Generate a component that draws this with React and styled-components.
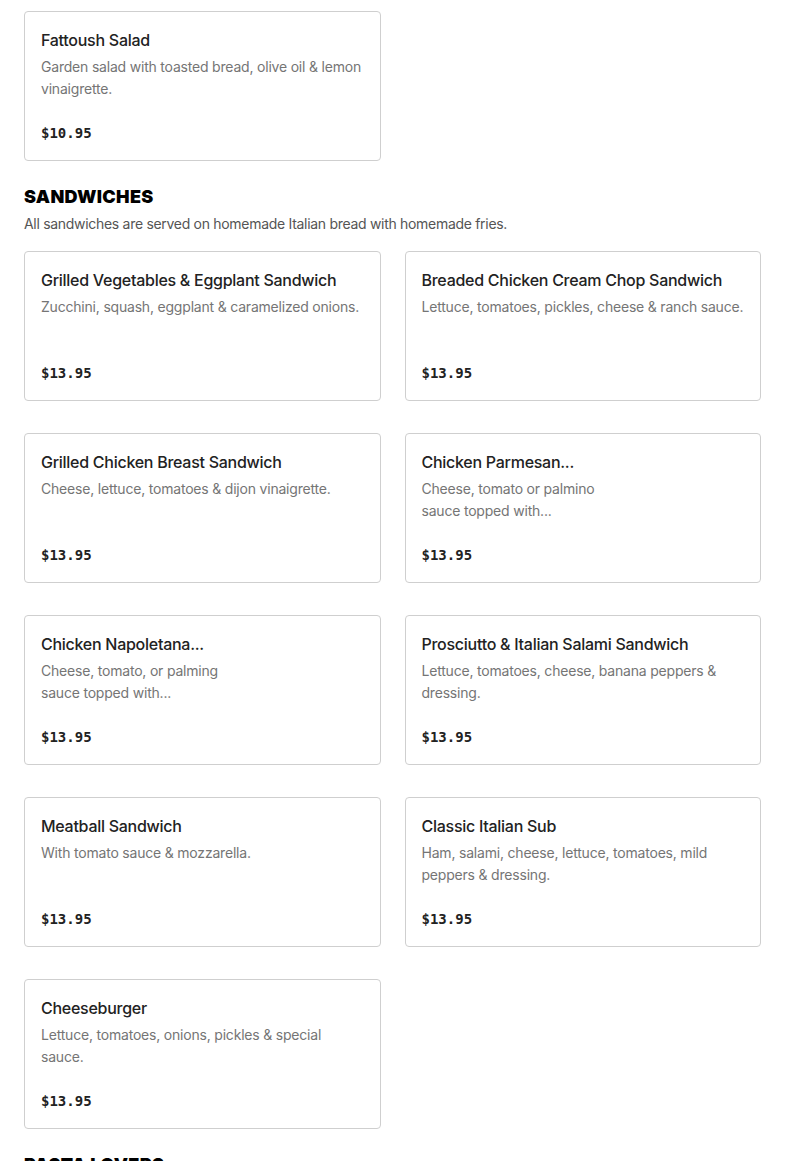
import React from "react";
import styled, { createGlobalStyle } from "styled-components";

const Global = createGlobalStyle`
  html, body { margin: 0; padding: 0; background: #fff; }
  body { font-family: Inter, "Noto Sans", sans-serif; color: #222; }
`;

const Page = styled.main`
  padding: 11px 24px 0;
  height: 1161px;
  overflow: hidden;
  box-sizing: border-box;
`;

const Section = styled.section`
  margin-bottom: 28px;
`;

const Heading = styled.h2`
  margin: 0;
  font-family: Inter, "Liberation Sans", sans-serif;
  font-weight: 900;
  font-size: 18px;
  line-height: 16px;
  letter-spacing: 0.3px;
  color: #000;
  text-transform: uppercase;
`;

const Intro = styled.p`
  margin: 8px 0 16px;
  font-size: 14px;
  line-height: 22px;
  letter-spacing: -0.3px;
  color: #555;
`;

const Grid = styled.div`
  display: grid;
  grid-template-columns: 1fr 1fr;
  column-gap: 24px;
  row-gap: 32px;
`;

const Card = styled.article`
  box-sizing: border-box;
  height: 150px;
  border: 1px solid #cfcfcf;
  border-radius: 4px;
  padding: 16px;
  display: flex;
  flex-direction: column;
`;

const Title = styled.h3`
  margin: 0;
  font-size: 16px;
  font-weight: 500;
  line-height: 24px;
  color: #222;
  letter-spacing: -0.27px;
`;

const Desc = styled.p`
  margin: 4px 0 0;
  font-size: 14px;
  line-height: 22px;
  letter-spacing: -0.2px;
  color: #757575;
`;

const Price = styled.div`
  margin-top: auto;
  font-family: "DejaVu Sans Mono", "Liberation Mono", monospace;
  font-weight: 700;
  font-size: 14px;
  line-height: 22px;
  color: #222;
`;

const salads = [
  { t: "Fattoush Salad", d: "Garden salad with toasted bread, olive oil & lemon vinaigrette.", p: "$10.95" },
];

const sandwiches = [
  { t: "Grilled Vegetables & Eggplant Sandwich", d: "Zucchini, squash, eggplant & caramelized onions.", p: "$13.95" },
  { t: "Breaded Chicken Cream Chop Sandwich", d: "Lettuce, tomatoes, pickles, cheese & ranch sauce.", p: "$13.95" },
  { t: "Grilled Chicken Breast Sandwich", d: "Cheese, lettuce, tomatoes & dijon vinaigrette.", p: "$13.95" },
  { t: "Chicken Parmesan...", d: ["Cheese, tomato or palmino", "sauce topped with..."], p: "$13.95" },
  { t: "Chicken Napoletana...", d: ["Cheese, tomato, or palming", "sauce topped with..."], p: "$13.95" },
  { t: "Prosciutto & Italian Salami Sandwich", d: "Lettuce, tomatoes, cheese, banana peppers & dressing.", p: "$13.95" },
  { t: "Meatball Sandwich", d: "With tomato sauce & mozzarella.", p: "$13.95" },
  { t: "Classic Italian Sub", d: "Ham, salami, cheese, lettuce, tomatoes, mild peppers & dressing.", p: "$13.95" },
  { t: "Cheeseburger", d: "Lettuce, tomatoes, onions, pickles & special sauce.", p: "$13.95" },
];

function Item({ t, d, p }) {
  return (
    <Card>
      <Title>{t}</Title>
      <Desc>
        {Array.isArray(d)
          ? d.map((line, i) => (
              <React.Fragment key={i}>
                {i > 0 && <br />}
                {line}
              </React.Fragment>
            ))
          : d}
      </Desc>
      <Price>{p}</Price>
    </Card>
  );
}

export default function App() {
  return (
    <>
      <Global />
      <Page>
        <Section>
          <Grid>
            {salads.map((s) => (
              <Item key={s.t} {...s} />
            ))}
          </Grid>
        </Section>
        <Section>
          <Heading>Sandwiches</Heading>
          <Intro>All sandwiches are served on homemade Italian bread with homemade fries.</Intro>
          <Grid>
            {sandwiches.map((s) => (
              <Item key={s.t} {...s} />
            ))}
          </Grid>
        </Section>
        <Section>
          <Heading>Pasta Lovers</Heading>
        </Section>
      </Page>
    </>
  );
}
